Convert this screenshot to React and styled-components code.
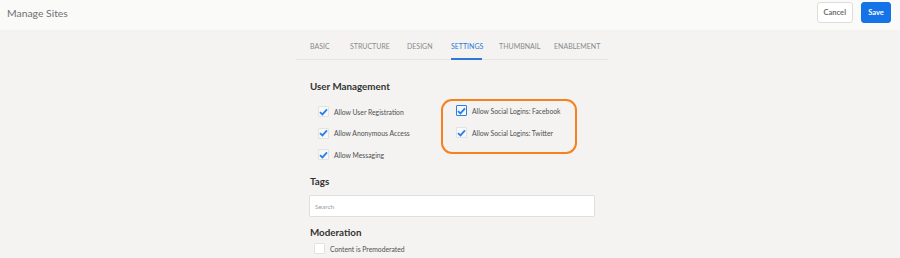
import React from "react";
import styled, { createGlobalStyle } from "styled-components";

const GlobalStyle = createGlobalStyle`
  html, body {
    margin: 0;
    padding: 0;
    background: #f4f3f2;
    font-family: Lato, "Open Sans", "Liberation Sans", sans-serif;
  }
`;

const Page = styled.div`
  width: 900px;
  height: 258px;
  overflow: hidden;
  background: #f4f3f2;
`;

const Header = styled.header`
  height: 30px;
  box-sizing: border-box;
  background: #fafaf9;
  display: flex;
  align-items: center;
  justify-content: space-between;
  padding: 0 9px 5px 7px;
`;

const Title = styled.h1`
  margin: 0;
  font-size: 10.4px;
  font-weight: 400;
  color: #707070;
`;

const Actions = styled.div`
  display: flex;
  gap: 8px;
`;

const Button = styled.button`
  font-family: inherit;
  height: 21px;
  padding: 0 6px;
  border-radius: 3px;
  font-size: 7.5px;
  font-weight: 700;
  border: 1px solid ${p => (p.$primary ? "#1473e6" : "#dddddd")};
  background: ${p => (p.$primary ? "#1473e6" : "#ffffff")};
  color: ${p => (p.$primary ? "#ffffff" : "#6e6e6e")};
  min-width: ${p => (p.$primary ? "30px" : "36px")};
`;

const Main = styled.main`
  width: 312px;
  margin: 0 auto;
  padding-left: 4px;
`;

const Tabs = styled.nav`
  display: flex;
  padding: 0 14px;
  height: 29px;
  border-bottom: 1px solid #e6e5e4;
`;

const Tab = styled.div`
  position: relative;
  width: ${p => p.$width}px;
  white-space: nowrap;
  font-size: 7px;
  color: ${p => (p.$active ? "#2c7ad6" : "#8a8a8a")};
  margin-right: ${p => p.$gap}px;
  padding-top: 12px;

  &::after {
    content: "";
    display: ${p => (p.$active ? "block" : "none")};
    position: absolute;
    left: 0;
    right: 0;
    bottom: -1px;
    height: 2px;
    background: #2c7ad6;
  }
`;

const Content = styled.div`
  padding: 0 14px;
`;

const Heading = styled.h2`
  margin: 0;
  font-size: 9.8px;
  line-height: 13px;
  font-weight: 700;
  color: #333333;
  padding-top: ${p => p.$top}px;
`;

const Columns = styled.div`
  display: flex;
  align-items: flex-start;
  padding-top: 12px;
`;

const Column = styled.div`
  display: flex;
  flex-direction: column;
  gap: 10.5px;
  width: ${p => p.$width}px;
  padding-left: ${p => p.$indent}px;
  padding-top: ${p => p.$top || 0}px;
`;

const Highlight = styled.div`
  position: relative;
  display: flex;
  flex-direction: column;
  gap: 11px;
  padding-left: 6px;

  &::before {
    content: "";
    position: absolute;
    left: -9px;
    top: -6px;
    width: 136px;
    height: 55px;
    border: 2.5px solid #f6821f;
    border-radius: 11px;
    box-sizing: border-box;
  }
`;

const Row = styled.label`
  display: flex;
  align-items: center;
  gap: 5px;
  height: 11px;
  font-size: 6.8px;
  color: #505050;
`;

const Box = styled.span`
  width: 11px;
  height: 11px;
  box-sizing: border-box;
  border: ${p => (p.$focus ? "1.5px solid #2680eb" : "1px solid #e3e3e3")};
  border-radius: 1px;
  background: ${p => (p.$checked ? "#f8f8f8" : "#ffffff")};
  display: flex;
  align-items: center;
  justify-content: center;
  flex-shrink: 0;
`;

const Check = () => (
  <svg width="9" height="8" viewBox="0 0 9 8">
    <path d="M1 4.2 L3.4 6.4 L8 1.4" fill="none" stroke="#2680eb" strokeWidth="1.8" />
  </svg>
);

const Checkbox = ({ label, checked, focus }) => (
  <Row>
    <Box $checked={checked} $focus={focus}>{checked && <Check />}</Box>
    {label}
  </Row>
);

const Search = styled.input`
  display: block;
  box-sizing: border-box;
  width: 286px;
  height: 22px;
  margin: 7px 0 0 -1px;
  border: 1px solid #dedede;
  border-radius: 2px;
  background: #ffffff;
  padding: 0 5px;
  font-family: inherit;
  font-size: 6.5px;
  outline: none;

  &::placeholder {
    color: #9a9a9a;
  }
`;

const tabs = [
  { name: "BASIC", width: 18, gap: 22 },
  { name: "STRUCTURE", width: 38, gap: 19 },
  { name: "DESIGN", width: 24, gap: 20 },
  { name: "SETTINGS", width: 31, gap: 17, active: true },
  { name: "THUMBNAIL", width: 39, gap: 16 },
  { name: "ENABLEMENT", width: 44, gap: 0 },
];

export default function App() {
  return (
    <Page>
      <GlobalStyle />
      <Header>
        <Title>Manage Sites</Title>
        <Actions>
          <Button>Cancel</Button>
          <Button $primary>Save</Button>
        </Actions>
      </Header>
      <Main>
        <Tabs>
          {tabs.map(t => (
            <Tab key={t.name} $active={t.active} $width={t.width} $gap={t.gap}>{t.name}</Tab>
          ))}
        </Tabs>
        <Content>
          <Heading $top={20}>User Management</Heading>
          <Columns>
            <Column $width={132} $indent={8} $top={1}>
              <Checkbox label="Allow User Registration" checked />
              <Checkbox label="Allow Anonymous Access" checked />
              <Checkbox label="Allow Messaging" checked />
            </Column>
            <Highlight>
              <Checkbox label="Allow Social Logins: Facebook" checked focus />
              <Checkbox label="Allow Social Logins: Twitter" checked />
            </Highlight>
          </Columns>
          <Heading $top={15}>Tags</Heading>
          <Search placeholder="Search" />
          <Heading $top={9}>Moderation</Heading>
          <Column $indent={4} $top={4}>
            <Checkbox label="Content is Premoderated" />
          </Column>
        </Content>
      </Main>
    </Page>
  );
}
